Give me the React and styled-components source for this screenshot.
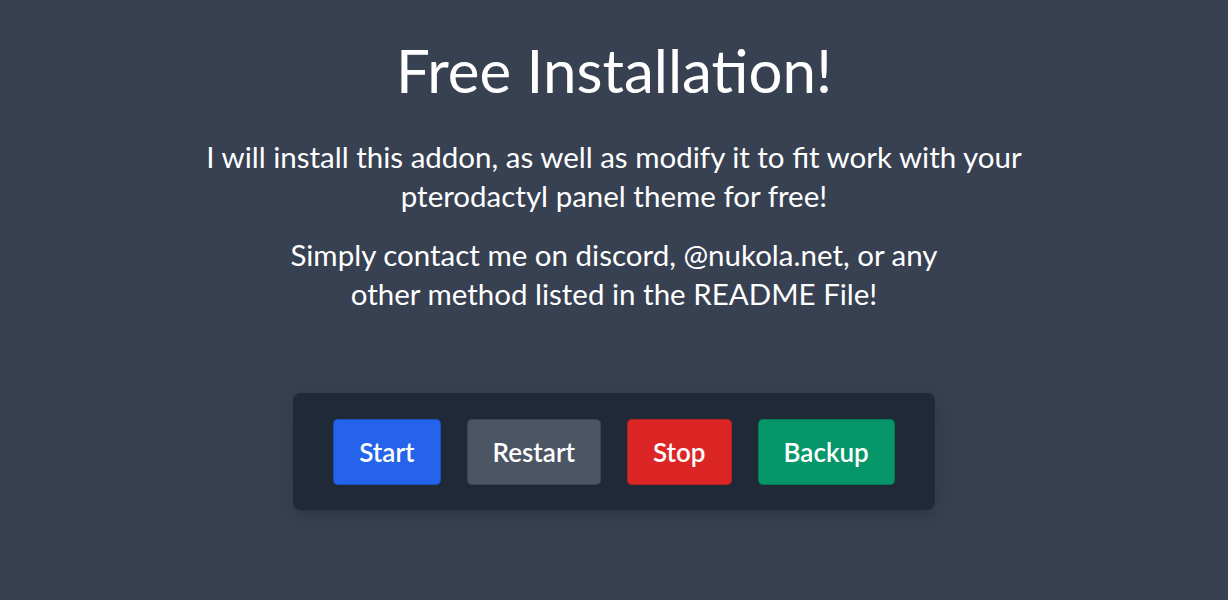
import React from "react";
import styled, { createGlobalStyle } from "styled-components";

const Global = createGlobalStyle`
  html, body { margin: 0; padding: 0; }
  body {
    background: #374151;
    font-family: Lato, "Open Sans", sans-serif;
    color: #ffffff;
    min-height: 600px;
  }
`;

const Page = styled.main`
  display: flex;
  flex-direction: column;
  align-items: center;
  padding-top: 35px;
  text-align: center;
`;

const Title = styled.h1`
  margin: 0;
  font-size: 60px;
  font-weight: 400;
  line-height: 70px;
`;

const Text = styled.p`
  margin: ${(p) => p.$top || 0}px 0 0;
  font-size: 29.5px;
  line-height: 39px;
  font-weight: 400;
`;

const Panel = styled.div`
  margin-top: 80px;
  display: flex;
  gap: 26px;
  padding: 26px 40px 25px;
  background: #1f2937;
  border-radius: 8px;
  box-shadow: 0 4px 24px 2px rgba(0, 0, 0, 0.12), 0 8px 10px -6px rgba(0, 0, 0, 0.12);
`;

const Button = styled.button`
  height: 66px;
  padding: 0 25px;
  border: 1px solid rgba(0, 0, 0, 0.18);
  border-radius: 5px;
  background: ${(p) => p.$bg};
  color: #ffffff;
  font-family: Lato, "Open Sans", sans-serif;
  font-size: 26px;
  font-weight: 600;
  cursor: pointer;
`;

export default function App() {
  return (
    <>
      <Global />
      <Page>
        <Title>Free Installation!</Title>
        <Text $top={32}>
          I will install this addon, as well as modify it to fit work with your
          <br />
          pterodactyl panel theme for free!
        </Text>
        <Text $top={20}>
          Simply contact me on discord, @nukola.net, or any
          <br />
          other method listed in the README File!
        </Text>
        <Panel>
          <Button $bg="#2563eb">Start</Button>
          <Button $bg="#4b5563">Restart</Button>
          <Button $bg="#dc2626">Stop</Button>
          <Button $bg="#059669">Backup</Button>
        </Panel>
      </Page>
    </>
  );
}
